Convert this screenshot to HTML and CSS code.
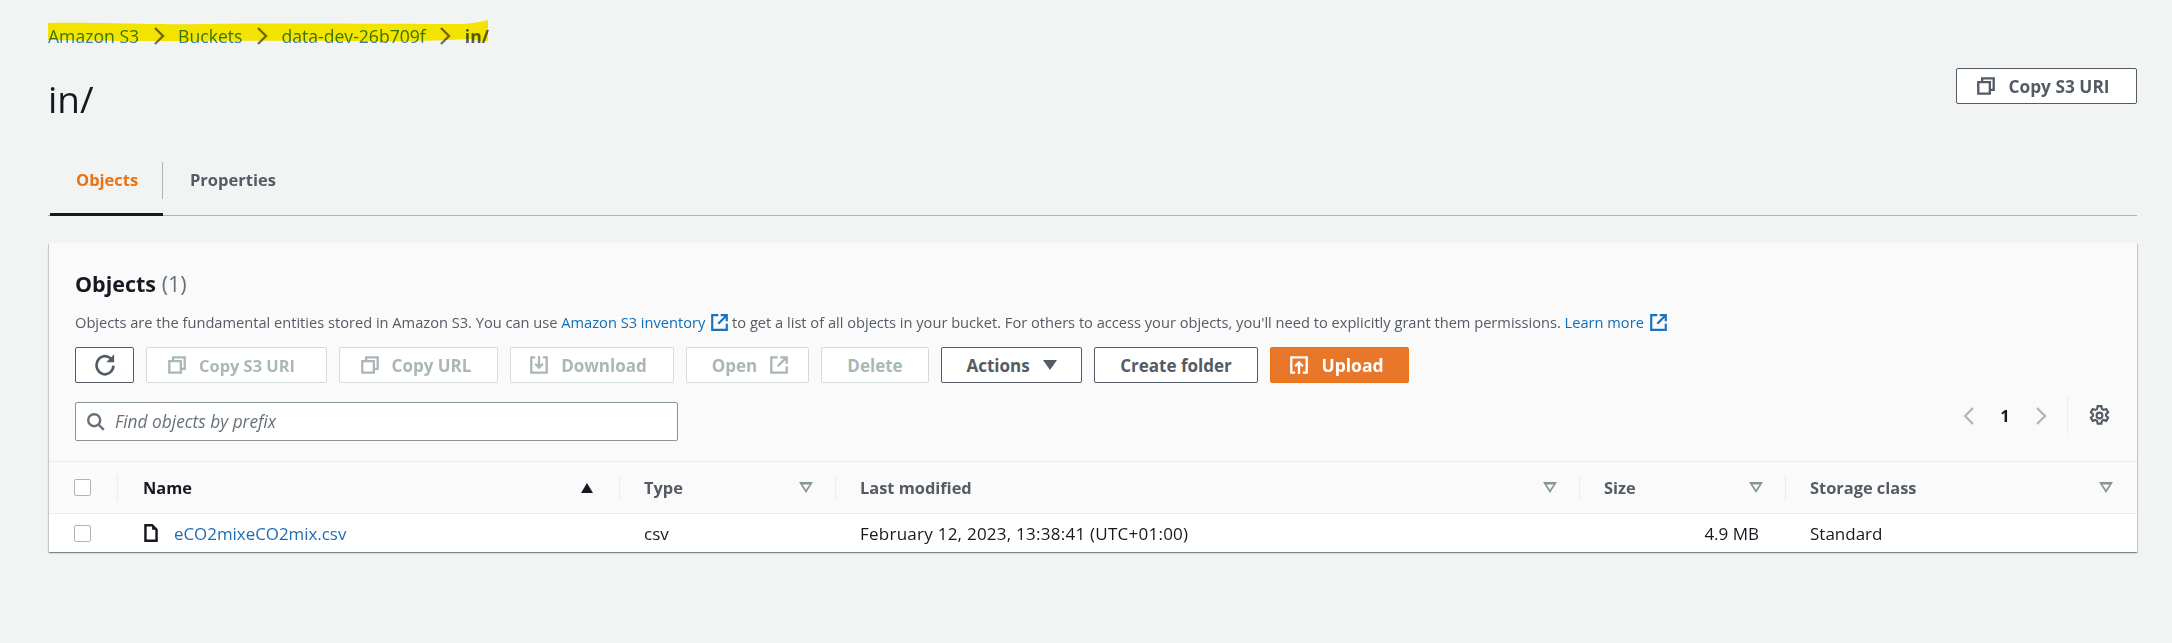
FILE: index.html
```html
<!DOCTYPE html>
<html lang="en">
<head>
<meta charset="utf-8">
<title>in/ - S3 bucket</title>
<link rel="stylesheet" href="styles.css">
</head>
<body>
<main class="page">
  <nav class="crumbs">
    <a class="crumb c1">Amazon S3</a>
    <svg class="sep" viewBox="0 0 12 20"><path d="M2 2l8 8-8 8"/></svg>
    <a class="crumb">Buckets</a>
    <svg class="sep" viewBox="0 0 12 20"><path d="M2 2l8 8-8 8"/></svg>
    <a class="crumb">data-dev-26b709f</a>
    <svg class="sep" viewBox="0 0 12 20"><path d="M2 2l8 8-8 8"/></svg>
    <strong class="crumb-current">in/</strong>
    <svg class="marker" viewBox="0 0 442 24" preserveAspectRatio="none"><path d="M0 3C60 2 90 5 160 4S340 4 410 4C424 4 434 2 442 0V21C436 22 430 20 424 19C380 21 340 22 290 21S60 22 0 20Z"/></svg>
  </nav>

  <header class="head">
    <h1>in/</h1>
    <button class="btn btn-top"><svg class="ico" viewBox="1 1 14 14"><path d="M5 5V2h9v9h-3M2 5h9v9H2z"/></svg>Copy S3 URI</button>
  </header>

  <div class="tabs">
    <a class="tab active">Objects</a>
    <a class="tab">Properties</a>
  </div>

  <section class="panel">
    <div class="panel-head">
      <h2>Objects <span class="count">(1)</span></h2>
      <p class="desc">Objects are the fundamental entities stored in Amazon S3. You can use <a>Amazon S3 inventory<svg class="ext" viewBox="1 1 14 14"><path d="M7 2H2v12h12V9M9 2h5v5M14 2L7 9"/></svg></a> to get a list of all objects in your bucket. For others to access your objects, you'll need to explicitly grant them permissions. <a>Learn more<svg class="ext" viewBox="1 1 14 14"><path d="M7 2H2v12h12V9M9 2h5v5M14 2L7 9"/></svg></a></p>
      <div class="actions">
        <button class="btn w-refresh"><svg class="ico big" viewBox="0 0 20 20"><path d="M16.500 10.500a6.500 7 0 1 1-2.200-5.600"/><path class="fill" d="M17 1.800v6h-6z"/></svg></button>
        <button class="btn off w-copy"><svg class="ico" viewBox="1 1 14 14"><path d="M5 5V2h9v9h-3M2 5h9v9H2z"/></svg>Copy S3 URI</button>
        <button class="btn off w-url"><svg class="ico" viewBox="1 1 14 14"><path d="M5 5V2h9v9h-3M2 5h9v9H2z"/></svg>Copy URL</button>
        <button class="btn off w-dl"><svg class="ico" viewBox="1 1 14 14"><path d="M5 2H2v12h12V2h-3M8 1v9M5 7l3 3 3-3"/></svg>Download</button>
        <button class="btn off w-open">Open<svg class="ico" viewBox="1 1 14 14"><path d="M7 2H2v12h12V9M9 2h5v5M14 2L7 9"/></svg></button>
        <button class="btn off w-del">Delete</button>
        <button class="btn w-act">Actions<span class="caret-down"></span></button>
        <button class="btn w-new">Create folder</button>
        <button class="btn primary w-up"><svg class="ico" viewBox="1 1 14 14"><path d="M5 14H2V2h12v12h-3M8 15V6M5 9l3-3 3 3"/></svg>Upload</button>
      </div>
      <div class="tools">
        <label class="search">
          <svg class="ico-search" viewBox="1 1 15 15"><circle cx="7" cy="7" r="5"/><path d="M10.500 10.500L15 15"/></svg>
          <span class="placeholder">Find objects by prefix</span>
        </label>
        <div class="pager">
          <svg class="pg" viewBox="0 0 12 20"><path d="M10 2L2 10l8 8"/></svg>
          <span class="pg-num">1</span>
          <svg class="pg" viewBox="0 0 12 20"><path d="M2 2l8 8-8 8"/></svg>
          <span class="pg-sep"></span>
          <svg class="gear" viewBox="1 0.500 18 18"><path d="M8.400 1.500h3.200l.5 2.400 1.400.8 2.300-.8 1.600 2.800-1.800 1.600v1.400l1.800 1.600-1.600 2.800-2.300-.8-1.400.8-.5 2.400H8.400l-.5-2.400-1.400-.8-2.300.8-1.600-2.800 1.800-1.600V8.300L2.600 6.700l1.600-2.800 2.300.8 1.400-.8z"/><circle cx="10" cy="9.500" r="2.500"/></svg>
        </div>
      </div>
    </div>

    <div class="table">
      <div class="row hdr">
        <div class="cell cell-check"><span class="check"></span></div>
        <div class="cell sortable name"><span class="th strong">Name</span><span class="sort-up"></span></div>
        <div class="cell sortable"><span class="th">Type</span><span class="sort"></span></div>
        <div class="cell sortable"><span class="th">Last modified</span><span class="sort"></span></div>
        <div class="cell sortable"><span class="th">Size</span><span class="sort"></span></div>
        <div class="cell sortable last"><span class="th">Storage class</span><span class="sort"></span></div>
      </div>
      <div class="row body">
        <div class="cell cell-check"><span class="check"></span></div>
        <div class="cell name-cell"><svg class="file" viewBox="0 0 14 18"><path d="M2 2h6l4 4v10H2z"/><path class="fill" d="M8 2l4 4H8z"/></svg><a class="link">eCO2mixeCO2mix.csv</a></div>
        <div class="cell">csv</div>
        <div class="cell date">February 12, 2023, 13:38:41 (UTC+01:00)</div>
        <div class="cell right">4.9 MB</div>
        <div class="cell">Standard</div>
      </div>
    </div>
  </section>
</main>
</body>
</html>
```
FILE: styles.css
```css
* { box-sizing: border-box; }
html, body { margin: 0; height: 100%; }
body {
  background: #f2f3f3;
  color: #16191f;
  font-family: "Open Sans", "Liberation Sans", sans-serif;
  font-size: 17px;
  overflow: hidden;
}
svg { fill: none; stroke: currentColor; flex: none; }
svg .fill { fill: currentColor; stroke: none; }
.page { padding: 24px 35px 0 48px; }

.crumbs { position: relative; display: flex; align-items: center; height: 24px; font-size: 17.600px; color: #3a7bbf; }
.sep { width: 12px; height: 20px; margin: 0 13.500px; color: #6f6f6f; stroke-width: 2.400; }
.crumb-current { font-weight: 700; color: #545b64; }
.marker { position: absolute; left: 0; top: -4px; width: 440px; height: 24px; mix-blend-mode: multiply; fill: #fff000; stroke: none; }

.head { display: flex; justify-content: space-between; align-items: flex-start; margin-top: 20px; height: 94px; }
h1 { margin: 7px 0 0; font-size: 37px; font-weight: 400; line-height: 48px; }

.btn {
  display: flex; align-items: center; justify-content: center; gap: 13px;
  height: 36px; padding: 0; border: 1px solid #545b64; border-radius: 2px;
  background: #fff; color: #545b64;
  font: 700 17px "Open Sans", "Liberation Sans", sans-serif;
}
.btn.off { border-color: #d5dbdb; color: #aab7b8; background: #fff; }
.btn.primary { border-color: #ec7211; background: #e8772a; color: #fff; }
.btn-top { width: 181px; font-size: 17.300px; padding-right: 6px; }
.w-refresh { width: 59px; }
.w-copy { width: 181px; font-size: 16.400px; padding-right: 10px; }
.w-url { width: 159px; padding-right: 5px; }
.w-dl { width: 164px; padding-right: 7px; }
.w-open { width: 123px; padding-left: 5px; }
.w-del { width: 108px; }
.w-act { width: 141px; }
.w-new { width: 164px; }
.w-up { width: 139px; font-size: 17.500px; padding-right: 5px; }
.ico { width: 18px; height: 18px; stroke-width: 1.800; }
.ico.big { width: 26px; height: 26px; stroke-width: 2; }

.tabs { display: flex; height: 54px; border-bottom: 1px solid #aab7b8; position: relative; }
.tab { display: flex; align-items: center; font-size: 16.500px; font-weight: 700; color: #545b64; height: 54px; padding-bottom: 20px; }
.tab.active { width: 113px; margin-left: 2px; padding-left: 26px; padding-bottom: 17px; color: #ec7211; border-bottom: 3px solid #16191f; position: relative; }
.tab.active::after { content: ""; position: absolute; right: 0; top: 0; height: 37px; border-right: 1px solid #aab7b8; }
.tab + .tab { margin-left: 27px; }

.panel { margin-top: 27px; margin-left: 1px; background: #fafafa; box-shadow: 0 1px 1px 0 rgba(0,28,36,.3), 1px 1px 1px 0 rgba(0,28,36,.15), -1px 1px 1px 0 rgba(0,28,36,.15); }
.panel-head { padding: 25px 0 0 26px; height: 218px; position: relative; }
h2 { margin: 0; font-size: 21.500px; font-weight: 700; line-height: 32px; }
.count { font-weight: 400; color: #687078; }
.desc { margin: 10px 0 0; line-height: 24px; color: #545b64; white-space: nowrap; font-size: 14.640px; }
.desc a { color: #0f6fb5; }
.ext { width: 17px; height: 17px; margin: 0 0 -3px 6px; stroke-width: 1.800; color: #1a73c0; }
.actions { display: flex; gap: 12px; margin-top: 13px; }
.tools { display: flex; justify-content: space-between; margin-top: 19px; }
.search { display: flex; align-items: center; width: 603px; height: 39px; border: 1px solid #879596; border-radius: 2px; background: #fff; padding-left: 11px; gap: 10px; }
.ico-search { width: 18px; height: 18px; stroke-width: 2; color: #687078; }
.placeholder { font-style: italic; color: #687078; font-size: 17.300px; }
.pager { display: flex; align-items: center; height: 37px; margin: -5px 27px 0 0; }
.pg { width: 12px; height: 20px; color: #aab7b8; stroke-width: 2.200; }
.pg-num { width: 60px; text-align: center; font-weight: 700; font-size: 16.500px; }
.pg-sep { height: 37px; border-left: 1px solid #eaeded; margin: 0 21px 0 20px; }
.gear { width: 21px; height: 21px; color: #545b64; stroke-width: 1.800; }

.row { display: grid; grid-template-columns: 68px 502px 216px 744px 206px 1fr; align-items: center; }
.hdr { height: 53px; border-top: 1px solid #eaeded; border-bottom: 1px solid #eaeded; }
.body { height: 38px; background: #fff; }
.cell { display: flex; align-items: center; padding-left: 25px; height: 100%; }
.sortable { position: relative; justify-content: space-between; padding-right: 22px; font-weight: 700; font-size: 16.400px; color: #545b64; }
.sortable::before { content: ""; position: absolute; left: 0; top: 13px; height: 26px; border-left: 1px solid #eaeded; }
.th.strong { color: #16191f; }
.name { padding-left: 26px; padding-right: 26px; }
.name-cell { padding-left: 26px; }
.last { padding-right: 24px; }
.check { width: 17px; height: 17px; border: 1px solid #aab7b8; border-radius: 2px; background: #fff; }
.sort-up { width: 0; height: 0; border: 6.500px solid transparent; border-top: 0; border-bottom: 10px solid #16191f; }
.sort { width: 14px; height: 11px; background: #879596; clip-path: polygon(0 0, 100% 0, 50% 100%, 0 0, 25% 2.500px, 50% 70%, 75% 2.500px, 25% 2.500px); }
.caret-down { width: 0; height: 0; border: 7px solid transparent; border-bottom: 0; border-top: 10px solid #545b64; }
.file { width: 16px; height: 20px; margin: 0 15px 0 0; stroke-width: 2.200; color: #16191f; }
.link { color: #1f6bb5; font-size: 16.900px; }
.date { letter-spacing: .25px; }
.right { justify-content: flex-end; padding-right: 26px; }
```
